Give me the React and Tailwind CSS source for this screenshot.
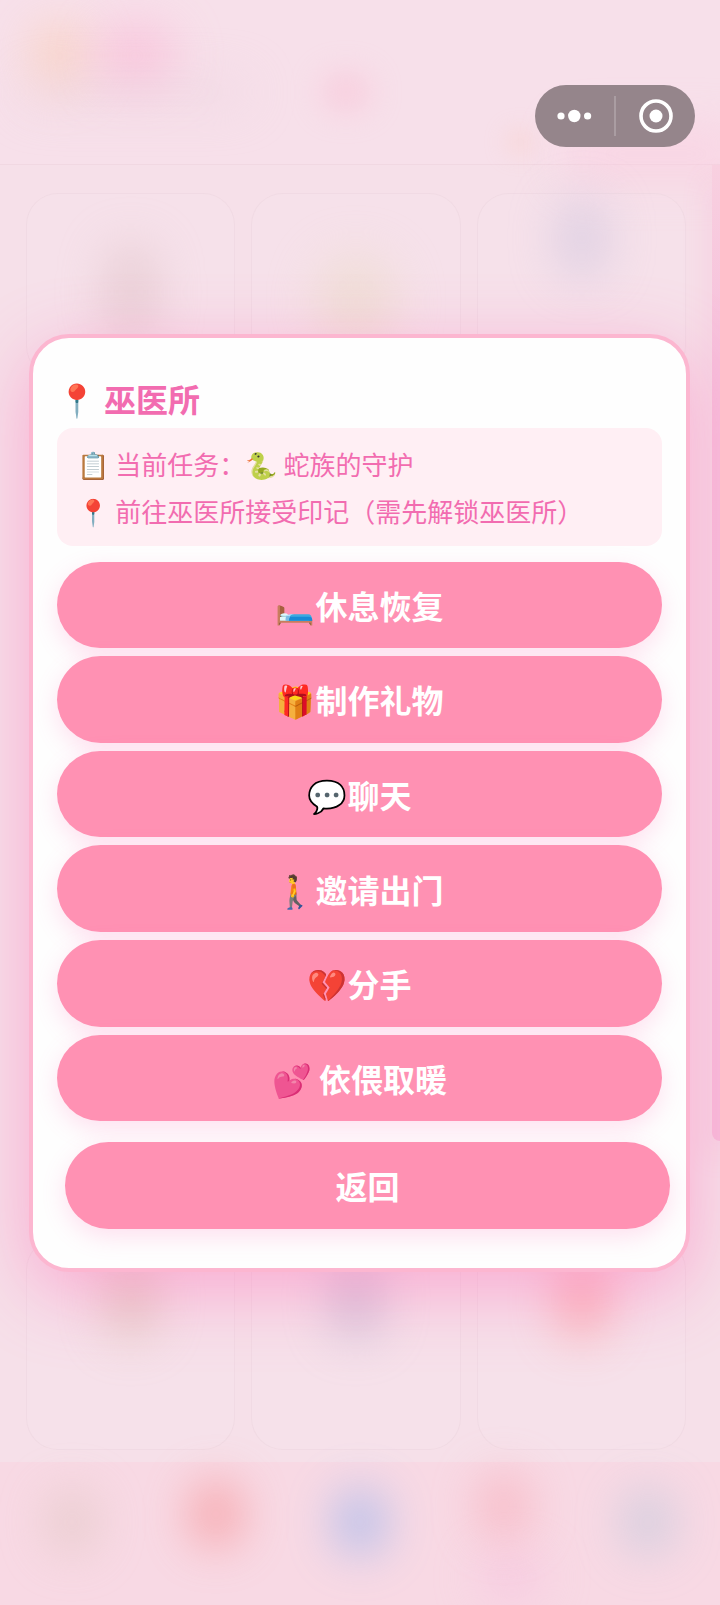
import React from "react";

const actions = [
  "🛏️休息恢复",
  "🎁制作礼物",
  "💬聊天",
  "🚶邀请出门",
  "💔分手",
  "💕 依偎取暖",
];

const topCards = [
  "left-20 top-[50px] h-24 w-12 bg-[#d9b9bd]",
  "left-16 top-[60px] h-24 w-20 bg-[#eadbc4]",
  "left-20 top-1 h-20 w-12 bg-[#c3bddb]",
];

const bottomCards = [
  "left-20 top-5 h-20 w-12 bg-[#d3b8a0]",
  "left-20 top-5 h-20 w-12 bg-[#b0a8c8]",
  "left-20 top-5 h-20 w-12 bg-[#ff8585]",
];

const navSpots = [
  "-translate-y-3 bg-[#dcc3bd]",
  "-translate-y-5 bg-[#f57d7d]",
  "-translate-y-3 bg-[#7fabf0]",
  "-translate-y-7 bg-[#f7a0ac]",
  "-translate-y-3 bg-[#b3c5da]",
];

const Button = ({ children, className = "" }) => (
  <button
    type="button"
    className={`w-full rounded-full bg-[#ff91b3] text-[32px] leading-[48px] font-bold text-white shadow-[0_8px_24px_rgba(255,105,180,0.2)] ${className}`}
  >
    {children}
  </button>
);

const CardRow = ({ spots, className }) => (
  <div className={`grid grid-cols-3 gap-4 pr-[34px] pl-[26px] ${className}`}>
    {spots.map((spot, i) => (
      <div key={i} className="relative rounded-[32px] border border-[#ecd6e0]/60 bg-white/5">
        <span className={`absolute rounded-full opacity-50 blur-xl ${spot}`} />
      </div>
    ))}
  </div>
);

/* Page behind the dialog */
const Backdrop = () => (
  <div className="absolute inset-0 flex flex-col overflow-hidden bg-[#f6e0e9]" aria-hidden="true">
    <header className="relative h-[165px] border-b border-[#f1d8e2] bg-[#f7e0ea]">
      <span className="absolute top-6 left-8 h-16 w-14 rounded-full bg-[#fbcbaa] opacity-60 blur-xl" />
      <span className="absolute top-6 left-24 h-16 w-20 rounded-full bg-[#fbb5d4] opacity-60 blur-xl" />
      <span className="absolute top-20 left-6 h-6 w-56 bg-[#e8cfdc] opacity-50 blur-xl" />
      <span className="absolute top-[74px] left-[322px] h-9 w-12 rounded-full bg-[#f9b8cf] opacity-50 blur-lg" />
      <span className="absolute top-[132px] left-[508px] h-5 w-6 rounded-full bg-[#f8c5b5] opacity-50 blur-md" />
      <span className="absolute top-[130px] -right-6 h-12 w-44 bg-[#fcc8dd] opacity-50 blur-xl" />
    </header>
    <main className="relative flex flex-1 flex-col justify-between pt-7 pb-3">
      <span className="absolute top-0 right-0 h-[976px] w-2 rounded-bl-lg bg-linear-to-b from-[#f8d0e0] via-[#f7bfdb] via-20% to-[#f7bedb] shadow-[0_16px_28px_rgba(255,105,180,0.3)]" />
      <CardRow spots={topCards} className="h-[185px] grid-rows-1" />
      <CardRow spots={bottomCards} className="h-[212px] grid-rows-1" />
    </main>
    <nav className="relative flex h-[143px] items-center justify-around bg-[#f8d9e4]">
      <span className="absolute right-44 bottom-2 h-10 w-16 rounded-full bg-[#f5b5dc] opacity-50 blur-xl" />
      {navSpots.map((spot, i) => (
        <span key={i} className={`h-16 w-12 rounded-full opacity-60 blur-xl ${spot}`} />
      ))}
    </nav>
  </div>
);

const Capsule = () => (
  <div className="absolute top-[85px] right-[25px] z-20 flex h-[62px] w-40 items-center rounded-full bg-[#95858b] text-white">
    <button type="button" aria-label="更多" className="flex h-full flex-1 items-center justify-center">
      <svg width="36" height="14" viewBox="0 0 36 14" fill="currentColor">
        <circle cx="4" cy="7" r="3.6" />
        <circle cx="17.3" cy="7" r="6.2" />
        <circle cx="30.6" cy="7" r="3.6" />
      </svg>
    </button>
    <span className="h-10 w-[2px] bg-[#aa9da2]" />
    <button type="button" aria-label="关闭" className="flex h-full flex-1 items-center justify-center">
      <svg width="34" height="34" viewBox="0 0 34 34">
        <circle cx="17" cy="17" r="15" fill="none" stroke="currentColor" strokeWidth="3.6" />
        <circle cx="17" cy="17" r="6.5" fill="currentColor" />
      </svg>
    </button>
  </div>
);

const App = () => {
  return (
    <div className="relative flex min-h-screen items-center font-['Noto_Sans_CJK_SC','Noto_Color_Emoji',sans-serif]">
      <Backdrop />
      <Capsule />

      <section
        role="dialog"
        aria-labelledby="place"
        className="relative z-10 mr-[30px] ml-[29px] flex-1 rounded-[40px] border-4 border-[#fcb6d0] bg-[#fefefe] px-6 pt-8 pb-[39px] shadow-[0_20px_72px_rgba(255,105,180,0.45)]"
      >
        <h1 id="place" className="mb-[2px] text-[32px] leading-[56px] font-bold text-[#f26cb0]">
          📍 巫医所
        </h1>

        {/* Current quest */}
        <div className="mb-4 rounded-2xl bg-[#ffeff4] px-5 pt-3 pb-3 text-[26px] leading-[47px] text-[#f26cb0]">
          <p>📋 当前任务：🐍 蛇族的守护</p>
          <p>📍 前往巫医所接受印记（需先解锁巫医所）</p>
        </div>

        <div className="grid h-[560px] grid-rows-6 gap-2">
          {actions.map((action) => (
            <Button key={action}>{action}</Button>
          ))}
        </div>

        <div className="mt-5 -mr-2 ml-2">
          <Button className="h-[87px]">返回</Button>
        </div>
      </section>
    </div>
  );
};

export default App;
